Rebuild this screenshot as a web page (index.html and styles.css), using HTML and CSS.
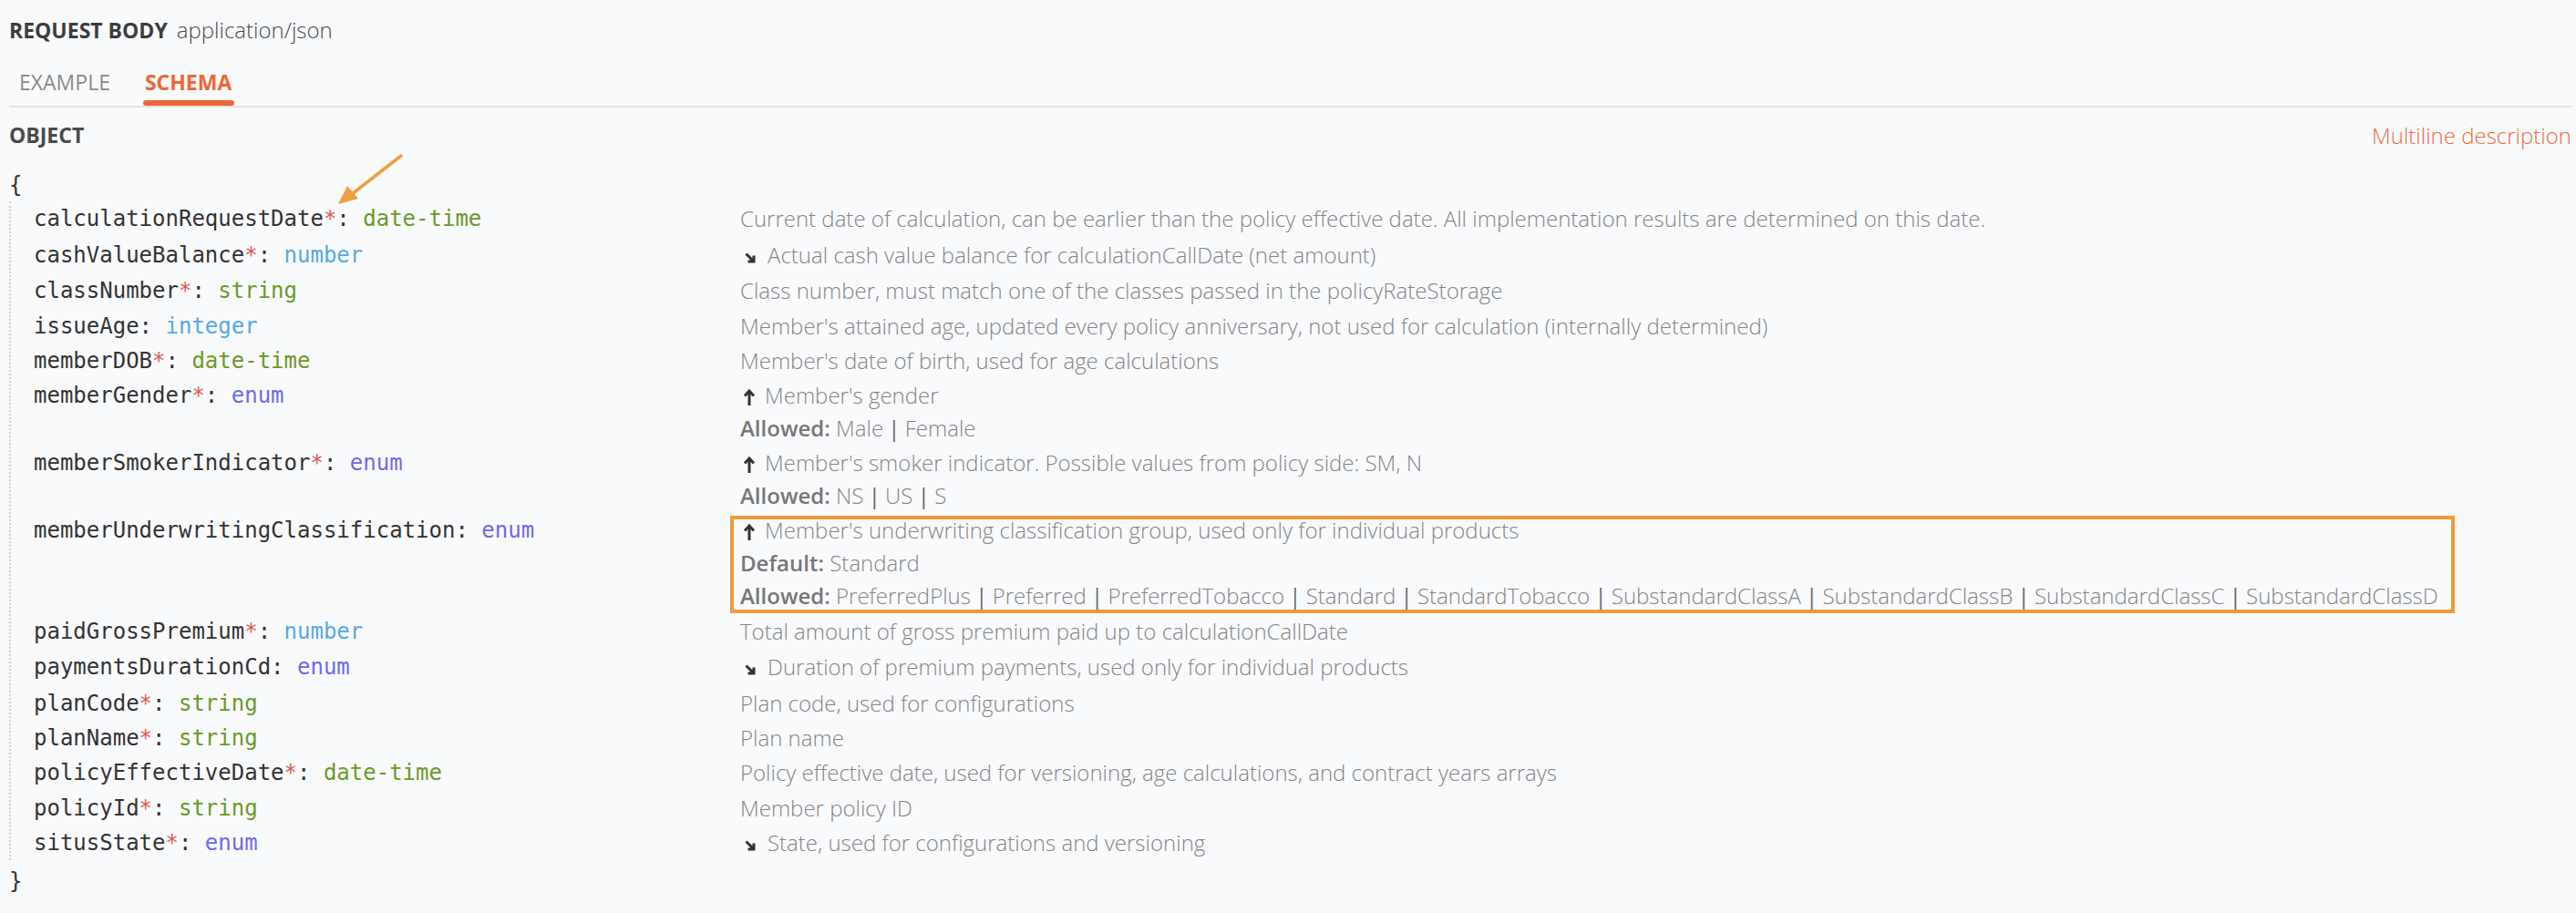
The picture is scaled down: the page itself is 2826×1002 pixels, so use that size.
FILE: index.html
```html
<!DOCTYPE html>
<html lang="en">
<head>
<meta charset="utf-8">
<title>Request body schema</title>
<link rel="stylesheet" href="styles.css">
</head>
<body>
<div class="page">
  <div class="req-head"><span class="req-title">REQUEST BODY</span><span class="req-type">application/json</span></div>
  <div class="tabs">
    <span class="tab">EXAMPLE</span>
    <span class="tab active">SCHEMA</span>
  </div>
  <div class="obj-head"><span class="obj-title">OBJECT</span><span class="obj-link">Multiline description</span></div>
  <div class="brace">{</div>
  <div class="props">
    <div class="row">
      <div class="name">calculationRequestDate<span class="req">*</span>: <span class="t-green">date-time</span></div>
      <div class="desc"><div class="line">Current date of calculation, can be earlier than the policy effective date. All implementation results are determined on this date.</div></div>
    </div>
    <div class="row tall">
      <div class="name">cashValueBalance<span class="req">*</span>: <span class="t-blue">number</span></div>
      <div class="desc"><div class="line"><svg class="ic" viewBox="0 0 14 16"><path d="M2.5 3.5 L11 12 M4.5 12 H11 V5.5" fill="none" stroke="#333" stroke-width="3"/></svg>Actual cash value balance for calculationCallDate (net amount)</div></div>
    </div>
    <div class="row">
      <div class="name">classNumber<span class="req">*</span>: <span class="t-green">string</span></div>
      <div class="desc"><div class="line">Class number, must match one of the classes passed in the policyRateStorage</div></div>
    </div>
    <div class="row">
      <div class="name">issueAge: <span class="t-blue">integer</span></div>
      <div class="desc"><div class="line">Member's attained age, updated every policy anniversary, not used for calculation (internally determined)</div></div>
    </div>
    <div class="row">
      <div class="name">memberDOB<span class="req">*</span>: <span class="t-green">date-time</span></div>
      <div class="desc"><div class="line">Member's date of birth, used for age calculations</div></div>
    </div>
    <div class="row">
      <div class="name">memberGender<span class="req">*</span>: <span class="t-purple">enum</span></div>
      <div class="desc">
        <div class="line"><svg class="ic up" viewBox="0 0 14 20"><path d="M7 19 V3.5 M2 8.5 L7 3 L12 8.5" fill="none" stroke="#333" stroke-width="3"/></svg>Member's gender</div>
        <div class="line"><b>Allowed:</b> Male <span class="sep">|</span> Female</div>
      </div>
    </div>
    <div class="row">
      <div class="name">memberSmokerIndicator<span class="req">*</span>: <span class="t-purple">enum</span></div>
      <div class="desc">
        <div class="line"><svg class="ic up" viewBox="0 0 14 20"><path d="M7 19 V3.5 M2 8.5 L7 3 L12 8.5" fill="none" stroke="#333" stroke-width="3"/></svg>Member's smoker indicator. Possible values from policy side: SM, N</div>
        <div class="line"><b>Allowed:</b> NS <span class="sep">|</span> US <span class="sep">|</span> S</div>
      </div>
    </div>
    <div class="row">
      <div class="name">memberUnderwritingClassification: <span class="t-purple">enum</span></div>
      <div class="desc marked">
        <div class="line"><svg class="ic up" viewBox="0 0 14 20"><path d="M7 19 V3.5 M2 8.5 L7 3 L12 8.5" fill="none" stroke="#333" stroke-width="3"/></svg>Member's underwriting classification group, used only for individual products</div>
        <div class="line"><b>Default:</b> Standard</div>
        <div class="line"><b>Allowed:</b> PreferredPlus <span class="sep">|</span> Preferred <span class="sep">|</span> PreferredTobacco <span class="sep">|</span> Standard <span class="sep">|</span> StandardTobacco <span class="sep">|</span> SubstandardClassA <span class="sep">|</span> SubstandardClassB <span class="sep">|</span> SubstandardClassC <span class="sep">|</span> SubstandardClassD</div>
        <div class="highlight"></div>
      </div>
    </div>
    <div class="row">
      <div class="name">paidGrossPremium<span class="req">*</span>: <span class="t-blue">number</span></div>
      <div class="desc"><div class="line">Total amount of gross premium paid up to calculationCallDate</div></div>
    </div>
    <div class="row tall">
      <div class="name">paymentsDurationCd: <span class="t-purple">enum</span></div>
      <div class="desc"><div class="line"><svg class="ic" viewBox="0 0 14 16"><path d="M2.5 3.5 L11 12 M4.5 12 H11 V5.5" fill="none" stroke="#333" stroke-width="3"/></svg>Duration of premium payments, used only for individual products</div></div>
    </div>
    <div class="row">
      <div class="name">planCode<span class="req">*</span>: <span class="t-green">string</span></div>
      <div class="desc"><div class="line">Plan code, used for configurations</div></div>
    </div>
    <div class="row">
      <div class="name">planName<span class="req">*</span>: <span class="t-green">string</span></div>
      <div class="desc"><div class="line">Plan name</div></div>
    </div>
    <div class="row">
      <div class="name">policyEffectiveDate<span class="req">*</span>: <span class="t-green">date-time</span></div>
      <div class="desc"><div class="line">Policy effective date, used for versioning, age calculations, and contract years arrays</div></div>
    </div>
    <div class="row">
      <div class="name">policyId<span class="req">*</span>: <span class="t-green">string</span></div>
      <div class="desc"><div class="line">Member policy ID</div></div>
    </div>
    <div class="row">
      <div class="name">situsState<span class="req">*</span>: <span class="t-purple">enum</span></div>
      <div class="desc"><div class="line"><svg class="ic" viewBox="0 0 14 16"><path d="M2.5 3.5 L11 12 M4.5 12 H11 V5.5" fill="none" stroke="#333" stroke-width="3"/></svg>State, used for configurations and versioning</div></div>
    </div>
  </div>
  <div class="brace close">}</div>
  <svg class="pointer" viewBox="0 0 90 64" width="90" height="64">
    <path d="M78 5 L24 47" fill="none" stroke="#f0a042" stroke-width="3.5" stroke-linecap="round"/>
    <path d="M9 58 L19 38 L31 52 Z" fill="#f0a042"/>
  </svg>
</div>
</body>
</html>
```
FILE: styles.css
```css
html, body {
  margin: 0;
  padding: 0;
  background: #f9fafc;
}
.page {
  position: relative;
  padding: 15px 5px 0 10px;
  font-family: "Open Sans", "Liberation Sans", sans-serif;
  color: #444;
}
.req-head {
  height: 36px;
  line-height: 36px;
  font-size: 23px;
}
.req-title {
  font-weight: 700;
  color: #3d3d3d;
  margin-right: 10px;
}
.req-type {
  font-weight: 300;
  font-size: 24px;
  color: #4a4a4a;
}
.tabs {
  display: flex;
  gap: 38px;
  padding-left: 11px;
  border-bottom: 2px solid #e3e4e6;
}
.tab {
  position: relative;
  font-size: 23px;
  line-height: 36px;
  padding: 21px 0 8px;
  color: #8a8a8a;
  font-weight: 400;
}
.tab.active {
  color: #ee6735;
  font-weight: 700;
}
.tab.active::after {
  content: "";
  position: absolute;
  left: -2px;
  right: -3px;
  bottom: 0;
  height: 6px;
  border-radius: 3px;
  background: #ee6735;
}
.obj-head {
  display: flex;
  justify-content: space-between;
  align-items: center;
  margin-top: 12px;
  height: 36px;
}
.obj-title {
  font-size: 23px;
  font-weight: 700;
  color: #4a4a4a;
}
.obj-link {
  font-size: 24px;
  color: #ee6a3c;
  font-weight: 300;
}
.brace {
  font-family: "DejaVu Sans Mono", "Liberation Mono", monospace;
  font-size: 24px;
  line-height: 36px;
  color: #333;
  margin-top: 19px;
}
.brace.close {
  margin-top: 5px;
}
.props {
  border-left: 2px dotted #cfd1d4;
  padding-left: 25px;
}
.row {
  display: grid;
  grid-template-columns: 775px 1fr;
  padding: 1.1px 0;
}
.row.tall {
  padding: 2.6px 0;
}
.name {
  font-family: "DejaVu Sans Mono", "Liberation Mono", monospace;
  font-size: 24px;
  line-height: 36px;
  color: #333;
  white-space: nowrap;
}
.req { color: #e2574e; }
.t-green { color: #6a9a26; }
.t-blue { color: #55a9e7; }
.t-purple { color: #6b6bec; }
.desc {
  position: relative;
  font-size: 24px;
  font-weight: 300;
  color: #858585;
}
.line {
  line-height: 36px;
  white-space: nowrap;
}
.line b {
  font-weight: 600;
  color: #777;
}
.sep {
  color: #666;
  font-weight: 400;
  margin: 0 -1px;
}
.ic {
  width: 14px;
  height: 16px;
  margin: 0 12px 0 4px;
  vertical-align: -2px;
}
.ic.up {
  width: 14px;
  height: 20px;
  margin: 0 10px 0 3px;
  vertical-align: -3px;
}
.highlight {
  position: absolute;
  left: -11px;
  top: 1.5px;
  width: 1892px;
  height: 107px;
  box-sizing: border-box;
  border: 4px solid #f0993a;
}
.pointer {
  position: absolute;
  left: 362px;
  top: 166px;
}
```
